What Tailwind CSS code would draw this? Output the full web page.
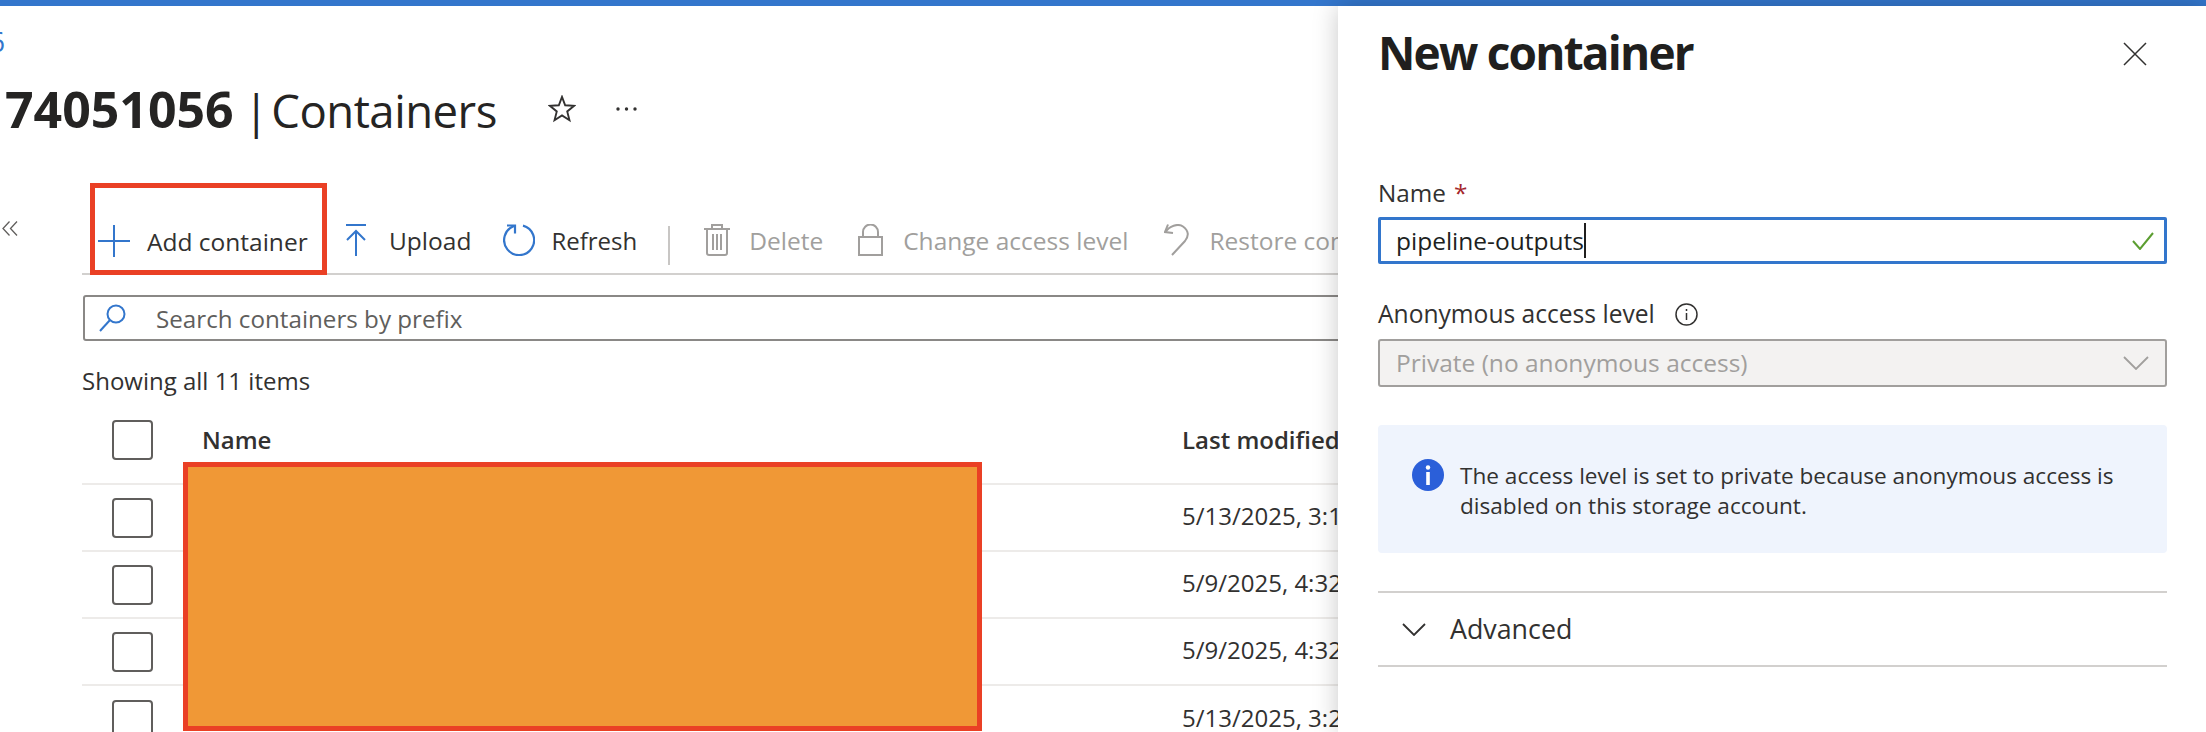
<!DOCTYPE html>
<html lang="en">
<head>
  <meta charset="UTF-8" />
  <title>Containers</title>
  <script src="https://cdn.jsdelivr.net/npm/@tailwindcss/browser@4"></script>
</head>
<body class="relative h-[732px] w-[2206px] overflow-hidden bg-white text-[#323130] font-['Open_Sans',sans-serif]">

  <!-- Top bar -->
  <div class="h-[6px] bg-[#3376cc]"></div>

  <!-- Breadcrumb and title -->
  <div class="h-[70px] flex items-center text-[28px] text-[#3376cc]"><span class="ml-[-11px]">6</span></div>
  <div class="h-[66px] flex items-center pl-[5px]">
    <h1 class="text-[45.500px] text-[#252423] whitespace-nowrap tracking-[-0.5px]"><span class="text-[50px] font-bold tracking-[0px]">74051056</span><span class="ml-[10px]">|</span><span class="ml-[3px]">Containers</span></h1>
    <svg class="ml-[51px]" width="28" height="28" viewBox="0 0 30 30" fill="none" stroke="#323130" stroke-width="2"><path d="M15 2l3.400 9 9.600.6-7.400 6 2.400 9.400-8-5.200-8 5.200 2.400-9.400-7.400-6 9.600-.6z"/></svg>
    <svg class="ml-[40px]" width="21" height="4" viewBox="0 0 21 4" fill="#323130"><circle cx="2" cy="2" r="1.700"/><circle cx="10.500" cy="2" r="1.700"/><circle cx="19" cy="2" r="1.700"/></svg>
  </div>

  <div class="flex">
    <!-- Collapse -->
    <div class="w-[82px] shrink-0 pt-[79px] pl-[2px]">
      <svg width="16" height="15" viewBox="0 0 16 15" fill="none" stroke="#605e5c" stroke-width="1.300"><path d="M7.500 .5L1 7.500l6.500 7M15 .5L8.500 7.500l6.500 7"/></svg>
    </div>

    <div class="w-[1256px] shrink-0 overflow-hidden">
      <!-- Toolbar -->
      <div class="flex items-stretch w-[1500px] h-[92px] pl-[8px] mt-[41px] border-b-2 border-[#d2d0ce] text-[24.500px] whitespace-nowrap">
        <div class="h-[92px] w-[237px] border-[5px] border-[#ea4025] flex items-center pt-[24px] pl-[3px] shrink-0">
          <svg width="32" height="32" viewBox="0 0 32 32" fill="none" stroke="#3376cc" stroke-width="2"><path d="M16 0v32M0 16h32"/></svg>
          <span class="ml-[17px] relative top-[1px]">Add container</span>
        </div>
        <div class="flex items-center pt-[24px] pl-[19px]">
          <svg width="20" height="32" viewBox="0 0 20 32" fill="none" stroke="#3376cc" stroke-width="2"><path d="M0 1h20M10 32V8M1 16l9-9 9 9"/></svg>
          <span class="ml-[23px] relative top-[1px]">Upload</span>
        </div>
        <div class="flex items-center pt-[24px] pl-[32px]">
          <svg width="32" height="32" viewBox="0 0 32 32" fill="none" stroke="#3376cc" stroke-width="2.200"><path d="M20 1.600A15 15 0 1 1 11 2"/><path d="M4 1.500h8v8"/></svg>
          <span class="ml-[16px] relative top-[1px] text-[24px]">Refresh</span>
        </div>
        <div class="ml-[31px] mt-[43px] h-[39px] w-[2px] bg-[#c8c6c4]"></div>
        <div class="flex items-center pt-[24px] pl-[34px] text-[#a19f9d]">
          <svg width="26" height="32" viewBox="0 0 26 32" fill="none" stroke="#a19f9d" stroke-width="2"><path d="M0 5h26M8 5V1h10v4M3 5v24a2 2 0 0 0 2 2h16a2 2 0 0 0 2-2V5M9 10v16M13 10v16M17 10v16"/></svg>
          <span class="ml-[19px] relative top-[1px]">Delete</span>
        </div>
        <div class="flex items-center pt-[24px] pl-[35px] text-[#a19f9d]">
          <svg width="25" height="32" viewBox="0 0 25 32" fill="none" stroke="#a19f9d" stroke-width="2"><path d="M1 13h23v18H1zM5 13V8a7.500 7.500 0 0 1 15 0v5"/></svg>
          <span class="ml-[20px] relative top-[1px]">Change access level</span>
        </div>
        <div class="flex items-center pt-[24px] pl-[36px] text-[#a19f9d]">
          <svg width="25" height="32" viewBox="0 0 25 32" fill="none" stroke="#a19f9d" stroke-width="2"><path d="M4 .5L1 8l8 1"/><path d="M1.500 8C5 2 14-1 19 2.500 25 7 25 12 21 17L8 31"/></svg>
          <span class="ml-[20px] relative top-[1px]">Restore containers</span>
        </div>
      </div>

      <!-- Search -->
      <div class="mt-[20px] h-[46px] ml-[1px] w-[1300px] border-2 border-[#8a8886] rounded-[3px] flex items-center pl-[14px] text-[24.200px] text-[#605e5c]">
        <svg width="27" height="28" viewBox="0 0 27 28" fill="none" stroke="#3376cc" stroke-width="2"><circle cx="17" cy="10" r="8.500"/><path d="M11 16L1 27"/></svg>
        <span class="ml-[30px] relative top-[1px]">Search containers by prefix</span>
      </div>

      <div class="mt-[25px] h-[30px] flex items-center text-[24px]">Showing all 11 items</div>

      <!-- Table -->
      <div class="h-[89px] border-b-2 border-[#edebe9] flex items-center text-[24px] font-semibold">
        <div class="w-[120px] pl-[30px] shrink-0"><div class="w-[41px] h-[40px] border-2 border-[#605e5c] rounded-[4px]"></div></div>
        <div class="w-[980px] shrink-0">Name</div>
        <div class="whitespace-nowrap">Last modified</div>
      </div>
      <div class="h-[67px] border-b-2 border-[#edebe9] flex items-center text-[24px]">
        <div class="w-[120px] pl-[30px] shrink-0"><div class="w-[41px] h-[40px] border-2 border-[#605e5c] rounded-[4px]"></div></div>
        <div class="w-[980px] shrink-0"></div>
        <div class="whitespace-nowrap mb-[3px]">5/13/2025, 3:14 PM</div>
      </div>
      <div class="h-[67px] border-b-2 border-[#edebe9] flex items-center text-[24px]">
        <div class="w-[120px] pl-[30px] shrink-0"><div class="w-[41px] h-[40px] border-2 border-[#605e5c] rounded-[4px]"></div></div>
        <div class="w-[980px] shrink-0"></div>
        <div class="whitespace-nowrap mb-[3px]">5/9/2025, 4:32 PM</div>
      </div>
      <div class="h-[67px] border-b-2 border-[#edebe9] flex items-center text-[24px]">
        <div class="w-[120px] pl-[30px] shrink-0"><div class="w-[41px] h-[40px] border-2 border-[#605e5c] rounded-[4px]"></div></div>
        <div class="w-[980px] shrink-0"></div>
        <div class="whitespace-nowrap mb-[3px]">5/9/2025, 4:32 PM</div>
      </div>
      <div class="h-[67px] flex items-center text-[24px]">
        <div class="w-[120px] pl-[30px] shrink-0"><div class="w-[41px] h-[40px] border-2 border-[#605e5c] rounded-[4px]"></div></div>
        <div class="w-[980px] shrink-0"></div>
        <div class="whitespace-nowrap mb-[3px]">5/13/2025, 3:22 PM</div>
      </div>
    </div>
  </div>

  <!-- Redaction over the name column -->
  <div class="absolute left-[183px] top-[462px] w-[799px] h-[269px] bg-[#f09836] border-[5px] border-[#ea4025]"></div>

  <!-- New container panel -->
  <aside class="absolute left-[1338px] top-[6px] bottom-0 right-0 bg-white shadow-[0_0_24px_rgba(0,0,0,0.22)] pl-[40px] pr-[39px]">
    <div class="h-[92px] flex items-center justify-between">
      <h2 class="text-[46px] font-bold tracking-[-1.800px] text-[#201f1e] whitespace-nowrap">New container</h2>
      <svg class="mr-[20px] mt-[4px]" width="24" height="24" viewBox="0 0 24 24" fill="none" stroke="#323130" stroke-width="1.500"><path d="M1 1l22 22M23 1L1 23"/></svg>
    </div>

    <div class="mt-[77px] text-[24.300px] h-[36px] flex items-center">Name <span class="ml-[8px] text-[#a4262c]">*</span></div>
    <div class="mt-[6px] h-[47px] border-[3px] border-[#3376cc] rounded-[2px] flex items-center justify-between pl-[15px] pr-[10px] text-[24.500px]">
      <span class="border-r-2 border-[#201f1e] h-[35px] leading-[35px] text-[#201f1e]">pipeline-outputs</span>
      <svg width="22" height="18" viewBox="0 0 22 18" fill="none" stroke="#5c9e31" stroke-width="2"><path d="M1 9l7 8L21 1"/></svg>
    </div>

    <div class="mt-[32px] h-[36px] flex items-center text-[24.600px]">
      Anonymous access level
      <svg class="ml-[20px]" width="23" height="23" viewBox="0 0 23 23" fill="none" stroke="#323130" stroke-width="1.500"><circle cx="11.500" cy="11.500" r="10.500"/><path d="M11.500 10v7M11.500 6v2"/></svg>
    </div>
    <div class="mt-[7px] h-[48px] border-2 border-[#a19f9d] rounded-[3px] bg-[#f3f2f1] flex items-center justify-between pl-[16px] pr-[16px] text-[24.500px] text-[#a19f9d]">
      <span>Private (no anonymous access)</span>
      <svg width="26" height="14" viewBox="0 0 26 14" fill="none" stroke="#a19f9d" stroke-width="1.800"><path d="M1 1l12 12L25 1"/></svg>
    </div>

    <div class="mt-[38px] h-[128px] bg-[#eff4fd] rounded-[4px] flex pl-[34px] pt-[33px]">
      <svg class="shrink-0 mt-[1px]" width="32" height="32" viewBox="0 0 32 32"><circle cx="16" cy="16" r="16" fill="#2b5fd9"/><circle cx="16" cy="8.500" r="2.200" fill="#fff"/><rect x="14.200" y="13" width="3.600" height="13" fill="#fff"/></svg>
      <p class="ml-[16px] mt-[3px] text-[22.600px] leading-[30px] text-[#323130] whitespace-nowrap">The access level is set to private because anonymous access is<br />disabled on this storage account.</p>
    </div>

    <div class="mt-[38px] h-[76px] border-y-2 border-[#d2d0ce] flex items-center pl-[24px] text-[26.800px]">
      <svg width="24" height="13" viewBox="0 0 24 13" fill="none" stroke="#323130" stroke-width="1.800"><path d="M1 1l11 11L23 1"/></svg>
      <span class="ml-[24px]">Advanced</span>
    </div>
  </aside>
</body>
</html>
